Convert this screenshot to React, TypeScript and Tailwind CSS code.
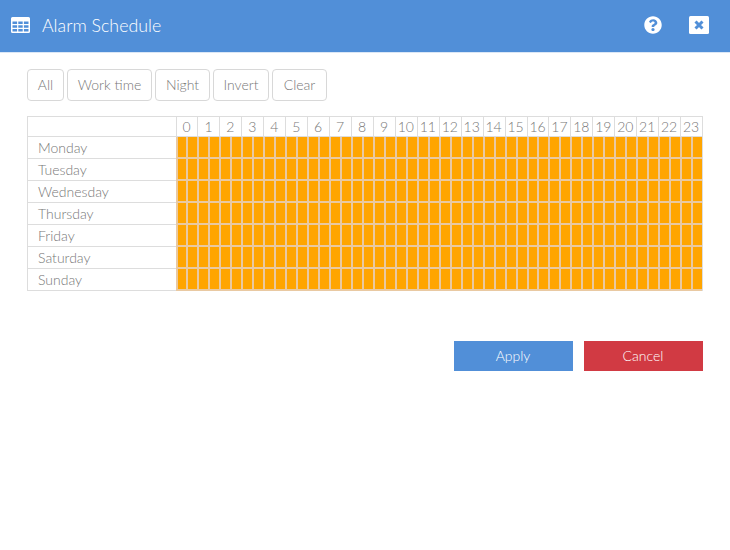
import { FaQuestionCircle } from "react-icons/fa";

const days = ["Monday", "Tuesday", "Wednesday", "Thursday", "Friday", "Saturday", "Sunday"];
const hours = Array.from({ length: 24 }, (_, i) => i);
const halves = Array.from({ length: 48 }, (_, i) => i);
const presets = [
  { label: "All", width: "w-[37px]" },
  { label: "Work time", width: "w-[85px]" },
  { label: "Night", width: "w-[55px]" },
  { label: "Invert", width: "w-[56px]" },
  { label: "Clear", width: "w-[55px]" },
];

const TableIcon = () => {
  return (
    <svg width="19" height="16" viewBox="0 0 19 16" className="mb-[2px]">
      <path
        fill="#fff"
        fillRule="evenodd"
        d="M1.5 0h16A1.5 1.5 0 0 1 19 1.5v13a1.5 1.5 0 0 1-1.5 1.5h-16A1.5 1.5 0 0 1 0 14.5v-13A1.5 1.5 0 0 1 1.5 0ZM1.5 4.5v2.6h4.6V4.5H1.5Zm5.8 0v2.6h4.4V4.5H7.3Zm5.6 0v2.6h4.6V4.5h-4.6ZM1.5 8.3v2.4h4.6V8.3H1.5Zm5.8 0v2.4h4.4V8.3H7.3Zm5.6 0v2.4h4.6V8.3h-4.6ZM1.5 11.9v2.6h4.6v-2.6H1.5Zm5.8 0v2.6h4.4v-2.6H7.3Zm5.6 0v2.6h4.6v-2.6h-4.6Z"
      />
    </svg>
  );
};

const CloseIcon = () => {
  return (
    <svg width="20" height="18" viewBox="0 0 20 18" className="ml-[27px] mb-[2px]">
      <rect width="20" height="18" rx="1.5" fill="#fff" />
      <path stroke="#518fd8" strokeWidth="3" d="M6.5 5.5l7 7m0-7l-7 7" />
    </svg>
  );
};

const Header = () => {
  return (
    <div className="h-[53px] bg-[#518fd8] border-b border-[#dbe7f6] flex items-center pl-[11px] pr-[21px] text-white">
      <TableIcon />
      <span className="ml-[12px] text-[17.8px] mb-[2px]">Alarm Schedule</span>
      <FaQuestionCircle className="ml-auto text-[18px] mb-[2px]" />
      <CloseIcon />
    </div>
  );
};

const Presets = () => {
  return (
    <div className="flex gap-[3px] ml-[27px] mt-[16px]">
      {presets.map((item) => {
        return (
          <button
            key={item.label}
            className={`${item.width} h-[32px] pb-[2px] border border-[#d8d8d8] rounded-[4px] text-[14px] text-[#777] bg-white`}
          >
            {item.label}
          </button>
        );
      })}
    </div>
  );
};

const Schedule = () => {
  return (
    <div className="ml-[27px] mt-[15px] w-[676px] border-t border-r border-[#ddd]">
      <div className="flex h-[20px]">
        <div className="w-[149px] border-l border-b border-[#ddd]" />
        {hours.map((hour) => {
          return (
            <div
              key={hour}
              className="w-[22px] border-l border-b border-[#ddd] flex items-center justify-center pr-[1px] text-[14px] text-[#777]"
            >
              {hour}
            </div>
          );
        })}
      </div>
      {days.map((day) => {
        return (
          <div key={day} className="flex h-[22px]">
            <div className="w-[149px] border-l border-b border-[#ddd] pl-[10px] text-[14px] leading-[22px] text-[#777]">
              {day}
            </div>
            {halves.map((half) => {
              return (
                <div
                  key={half}
                  className="w-[11px] bg-[#ffa500] border-l-2 border-b-2 border-[#e9c9a2]"
                />
              );
            })}
          </div>
        );
      })}
    </div>
  );
};

export default function App() {
  return (
    <div className="w-[730px] h-[550px] bg-white font-['Lato',sans-serif] font-light overflow-hidden">
      <Header />
      <Presets />
      <Schedule />
      <div className="flex justify-end gap-[11px] mt-[50px] mr-[27px]">
        <button className="w-[119px] h-[30px] pb-[1px] pr-[1px] bg-[#518fd8] text-white text-[14px]">Apply</button>
        <button className="w-[119px] h-[30px] pb-[1px] pr-[1px] bg-[#d13a43] text-white text-[14px]">Cancel</button>
      </div>
    </div>
  );
}
